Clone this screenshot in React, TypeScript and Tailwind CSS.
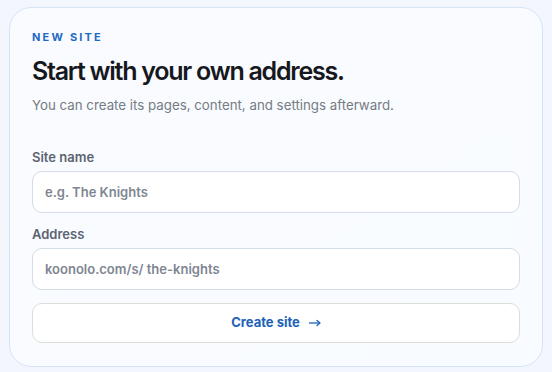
import React from "react";

const Field: React.FC<{ label: string; placeholder: string }> = ({ label, placeholder }) => (
  <div className="flex flex-col">
    <label className="text-[13px] font-semibold text-[#5b6472] leading-4 mb-[6px]">{label}</label>
    <input
      className="h-[42px] w-full rounded-[10px] border border-[#d3dce8] bg-white px-3 text-[13px] font-semibold text-[#374151] placeholder:text-[#7e8692] outline-none"
      placeholder={placeholder}
    />
  </div>
);

export default function App() {
  return (
    <div
      className="min-h-[372px] w-[552px] bg-[#f3f7fd] px-[9px] pt-[7px] pb-[7px]"
      style={{ fontFamily: "Inter, 'Noto Sans', sans-serif" }}
    >
      <div className="rounded-[22px] border border-[#d6e4f8] bg-gradient-to-br from-[#f9fbff] to-[#f8fbff] px-[22px] pt-[21px] pb-[23px]">
        <div className="text-[11px] font-bold tracking-[0.2em] text-[#1f68c4] leading-4">NEW SITE</div>
        <h1 className="mt-[10px] text-[25px] font-semibold tracking-[-0.05em] text-[#16181d] leading-8">
          Start with your own address.
        </h1>
        <p className="mt-[8px] text-[13.3px] text-[#767b84] leading-5">
          You can create its pages, content, and settings afterward.
        </p>
        <div className="mt-[34px] flex flex-col gap-[13px]">
          <Field label="Site name" placeholder="e.g. The Knights" />
          <Field label="Address" placeholder="koonolo.com/s/ the-knights" />
        </div>
        <button className="mt-[13px] flex h-[40px] w-full items-center justify-center gap-[9px] rounded-[10px] border border-[#dcdfd8] bg-white text-[13px] font-bold text-[#1c62b8]">
          <span>Create site</span>
          <svg width="12" height="8" viewBox="0 0 12 8" fill="none" stroke="currentColor" strokeWidth="1.3">
            <path d="M0 4h11" />
            <path d="M8 1.5L11 4L8 6.5" strokeLinecap="round" strokeLinejoin="round" />
          </svg>
        </button>
      </div>
    </div>
  );
}
